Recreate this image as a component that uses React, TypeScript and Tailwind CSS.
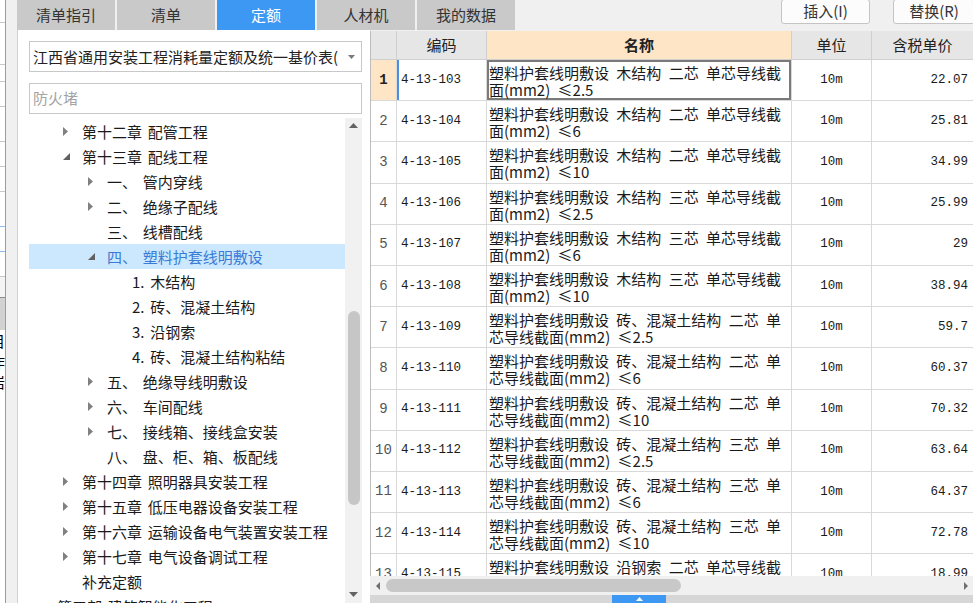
import React from 'react';

type TreeItem = { lvl: number; arrow: 'c' | 'e' | null; t: string; sel?: boolean };

const tree: TreeItem[] = [
  { lvl: 1, arrow: 'c', t: '第十二章 配管工程' },
  { lvl: 1, arrow: 'e', t: '第十三章 配线工程' },
  { lvl: 2, arrow: 'c', t: '一、 管内穿线' },
  { lvl: 2, arrow: 'c', t: '二、 绝缘子配线' },
  { lvl: 2, arrow: null, t: '三、 线槽配线' },
  { lvl: 2, arrow: 'e', t: '四、 塑料护套线明敷设', sel: true },
  { lvl: 3, arrow: null, t: '1. 木结构' },
  { lvl: 3, arrow: null, t: '2. 砖、混凝土结构' },
  { lvl: 3, arrow: null, t: '3. 沿钢索' },
  { lvl: 3, arrow: null, t: '4. 砖、混凝土结构粘结' },
  { lvl: 2, arrow: 'c', t: '五、 绝缘导线明敷设' },
  { lvl: 2, arrow: 'c', t: '六、 车间配线' },
  { lvl: 2, arrow: 'c', t: '七、 接线箱、接线盒安装' },
  { lvl: 2, arrow: null, t: '八、 盘、柜、箱、板配线' },
  { lvl: 1, arrow: 'c', t: '第十四章 照明器具安装工程' },
  { lvl: 1, arrow: 'c', t: '第十五章 低压电器设备安装工程' },
  { lvl: 1, arrow: 'c', t: '第十六章 运输设备电气装置安装工程' },
  { lvl: 1, arrow: 'c', t: '第十七章 电气设备调试工程' },
  { lvl: 1, arrow: null, t: '补充定额' },
  { lvl: 0, arrow: null, t: '第五部 建筑智能化工程' },
];

const lvlPad = ['pl-[3px]', 'pl-[28px]', 'pl-[53px]', 'pl-[78px]'];

type Row = { n: number; code: string; l1: string; l2: string; price: string };

const W1 = (a: string) => `塑料护套线明敷设 木结构 ${a} 单芯导线截`;
const B1 = (a: string) => `塑料护套线明敷设 砖、混凝土结构 ${a} 单`;

const rows: Row[] = [
  { n: 1, code: '4-13-103', l1: W1('二芯'), l2: '面(mm2) ≤2.5', price: '22.07' },
  { n: 2, code: '4-13-104', l1: W1('二芯'), l2: '面(mm2) ≤6', price: '25.81' },
  { n: 3, code: '4-13-105', l1: W1('二芯'), l2: '面(mm2) ≤10', price: '34.99' },
  { n: 4, code: '4-13-106', l1: W1('三芯'), l2: '面(mm2) ≤2.5', price: '25.99' },
  { n: 5, code: '4-13-107', l1: W1('三芯'), l2: '面(mm2) ≤6', price: '29' },
  { n: 6, code: '4-13-108', l1: W1('三芯'), l2: '面(mm2) ≤10', price: '38.94' },
  { n: 7, code: '4-13-109', l1: B1('二芯'), l2: '芯导线截面(mm2) ≤2.5', price: '59.7' },
  { n: 8, code: '4-13-110', l1: B1('二芯'), l2: '芯导线截面(mm2) ≤6', price: '60.37' },
  { n: 9, code: '4-13-111', l1: B1('二芯'), l2: '芯导线截面(mm2) ≤10', price: '70.32' },
  { n: 10, code: '4-13-112', l1: B1('三芯'), l2: '芯导线截面(mm2) ≤2.5', price: '63.64' },
  { n: 11, code: '4-13-113', l1: B1('三芯'), l2: '芯导线截面(mm2) ≤6', price: '64.37' },
  { n: 12, code: '4-13-114', l1: B1('三芯'), l2: '芯导线截面(mm2) ≤10', price: '72.78' },
  { n: 13, code: '4-13-115', l1: '塑料护套线明敷设 沿钢索 二芯 单芯导线截', l2: '面(mm2) ≤2.5', price: '18.99' },
];

function Collapsed() {
  return (
    <svg width="5" height="9" viewBox="0 0 5 9">
      <polygon points="0,0 5,4.5 0,9" fill="#808080" />
    </svg>
  );
}
function Expanded() {
  return (
    <svg width="7" height="7" viewBox="0 0 7 7">
      <polygon points="7,0 7,7 0,7" fill="#606060" />
    </svg>
  );
}

function LeftStrip() {
  const segs: [string, string][] = [
    ['h-[23px]', 'border-[#c8c8c8]'],
    ['h-[42px]', 'border-[#c8c8c8]'],
    ['h-[17px]', 'border-[#c8c8c8]'],
    ['h-[25px]', 'border-[#c8c8c8]'],
    ['h-[35px]', 'border-[#c8c8c8]'],
    ['h-[25px]', 'border-[#c8c8c8]'],
    ['h-[25px]', 'border-[#c8c8c8]'],
    ['h-[35px]', 'border-[#8fbcec]'],
    ['h-[25px]', 'border-[#8fbcec]'],
    ['h-[25px]', 'border-[#c8c8c8]'],
  ];
  return (
    <div className="w-[17px] h-full flex shrink-0">
      <div className="w-[5px] bg-white flex flex-col overflow-hidden">
        {segs.map(([h, c], i) => (
          <div key={i} className={`${h} ${c} border-b shrink-0`} />
        ))}
        <div className="h-[20px] shrink-0 bg-[#f4f4f4]" />
        <div className="h-[33px] shrink-0 bg-[#d2d2d2] border-t border-[#8a8a8a]" />
        <div className="h-[22px] shrink-0 overflow-hidden leading-[22px] text-[15px] text-black">
          <span className="block -ml-[10px]">目</span>
        </div>
        <div className="h-[44px] shrink-0 overflow-hidden leading-[20px] text-[15px] text-black">
          <span className="block -ml-[10px]">作</span>
          <span className="block -ml-[10px]">岩</span>
        </div>
      </div>
      <div className="w-[1px] h-full bg-[#9c9c9c]" />
      <div className="flex-1 h-full bg-[#f0f0f0]" />
    </div>
  );
}

function TopBar() {
  const tabs = ['清单指引', '清单', '定额', '人材机', '我的数据'];
  return (
    <div className="h-[30px] flex shrink-0">
      <div className="flex gap-[2px]">
        {tabs.map((t) => (
          <div
            key={t}
            className={
              t === '定额'
                ? 'w-[98px] h-[30px] flex items-center justify-center bg-[#3d98f4] text-white text-[15px]'
                : 'w-[98px] h-[30px] flex items-center justify-center bg-[#c9c9c9] text-[#333] text-[15px]'
            }
          >
            {t}
          </div>
        ))}
      </div>
      <div className="flex-1" />
      <div className="w-[89px] h-[25px] -mt-[1px] border border-[#c4c4c4] rounded-[3px] bg-[#fcfcfc] flex items-center justify-center text-[15px] text-[#333]">
        插入(I)
      </div>
      <div className="w-[23px]" />
      <div className="w-[82px] h-[25px] -mt-[1px] -mr-[2px] border border-[#c4c4c4] rounded-[3px] bg-[#fcfcfc] flex items-center justify-center text-[15px] text-[#333]">
        替换(R)
      </div>
    </div>
  );
}

function LeftPanel() {
  return (
    <div className="w-[353px] shrink-0 bg-white border-l border-[#d0d0d0] flex flex-col pl-[11px] pr-[8px] min-h-0">
      <div className="mt-[11px] h-[31px] shrink-0 border border-[#c8c8c8] flex items-center pl-[3px] pr-[6px]">
        <div className="flex-1 overflow-hidden whitespace-nowrap text-[15px] text-[#222] leading-[29px]">
          江西省通用安装工程消耗量定额及统一基价表(江西省
        </div>
        <svg width="7" height="4" viewBox="0 0 7 4" className="ml-[10px] shrink-0">
          <polygon points="0,0 7,0 3.5,4" fill="#7a7a7a" />
        </svg>
      </div>
      <div className="mt-[11px] h-[31px] shrink-0 border border-[#c8c8c8] flex items-center pl-[3px] text-[15px] text-[#a3a3a3]">
        防火堵
      </div>
      <div className="mt-[4px] flex-1 flex min-h-0">
        <div className="flex-1 overflow-hidden pt-[1px] min-w-0">
          {tree.map((it, i) => (
            <div
              key={i}
              className={
                (it.sel ? 'bg-[#cce8ff] text-[#3a7bd5] ' : 'text-[#1a1a1a] ') +
                lvlPad[it.lvl] +
                ' h-[25px] flex items-center whitespace-nowrap text-[15px] leading-[25px] [word-spacing:2.5px]'
              }
            >
              <div className="w-[25px] shrink-0 flex items-center pl-[6px]">
                {it.arrow === 'c' ? <Collapsed /> : it.arrow === 'e' ? <Expanded /> : null}
              </div>
              <span>{it.t}</span>
            </div>
          ))}
        </div>
        <div className="w-[17px] shrink-0 bg-[#f1f1f1] flex flex-col items-center">
          <div className="h-[14px] flex items-center justify-center shrink-0">
            <svg width="9" height="5" viewBox="0 0 9 5">
              <polygon points="0,5 9,5 4.5,0" fill="#636363" />
            </svg>
          </div>
          <div className="mt-[179px] w-[12px] h-[194px] rounded-full bg-[#c6c6c6] shrink-0" />
          <div className="flex-1" />
          <div className="h-[18px] flex items-center justify-center shrink-0">
            <svg width="9" height="5" viewBox="0 0 9 5">
              <polygon points="0,0 9,0 4.5,5" fill="#636363" />
            </svg>
          </div>
        </div>
      </div>
    </div>
  );
}

const grid = 'grid grid-cols-[26px_90px_305px_80px_1fr]';
const mono = "font-['Liberation_Mono','Noto_Sans_CJK_SC',monospace]";

function TablePanel() {
  return (
    <div className="flex-1 flex flex-col min-w-0">
      <div className="flex-1 overflow-hidden mt-[1px] border-l border-[#bdbdbd] bg-white min-h-0">
        <div className={`${grid} h-[29px] text-[15px] text-[#222]`}>
          <div className="bg-[#e6e6e6] border-r border-b border-[#cfcfcf]" />
          <div className="bg-[#e6e6e6] border-r border-b border-[#cfcfcf] flex items-center justify-center">编码</div>
          <div className="bg-[#fde5c6] border-r border-b border-[#cfcfcf] flex items-center justify-center font-bold">名称</div>
          <div className="bg-[#e6e6e6] border-r border-b border-[#cfcfcf] flex items-center justify-center">单位</div>
          <div className="bg-[#e6e6e6] border-b border-[#cfcfcf] flex items-center justify-center">含税单价</div>
        </div>
        {rows.map((r) => {
          const sel = r.n === 1;
          return (
            <div key={r.n} className={`${grid} h-[41.2px] text-[#1a1a1a]`}>
              <div
                className={
                  (sel ? 'bg-[#fde5c6] font-bold text-[#222] ' : 'text-[#555] ') +
                  `${mono} border-r border-b border-[#d9d9d9] flex items-center justify-center text-[14px]`
                }
              >
                {r.n}
              </div>
              <div
                className={
                  (sel ? 'shadow-[inset_2px_0_0_#4a8fe0] ' : '') +
                  `${mono} border-r border-b border-[#d9d9d9] flex items-center pl-[4px] text-[12.5px]`
                }
              >
                {r.code}
              </div>
              <div
                className={
                  (sel ? 'shadow-[inset_0_0_0_2px_#7a7a7a] ' : '') +
                  'border-r border-b border-[#d9d9d9] pl-[2px] pt-[4px] text-[15px] leading-[17px] whitespace-nowrap overflow-hidden [word-spacing:4px]'
                }
              >
                <div>{r.l1}</div>
                <div>{r.l2}</div>
              </div>
              <div className={`${mono} border-r border-b border-[#d9d9d9] flex items-center justify-center text-[12.5px]`}>
                10m
              </div>
              <div className={`${mono} border-b border-[#d9d9d9] flex items-center justify-end pr-[5px] text-[12.5px]`}>
                {r.price}
              </div>
            </div>
          );
        })}
      </div>
      <div className="h-[19px] shrink-0 bg-[#f0f0f0] flex items-center pl-[6px] pr-[5px]">
        <svg width="4" height="8" viewBox="0 0 4 8">
          <polygon points="4,0 4,8 0,4" fill="#707070" />
        </svg>
        <div className="ml-[6px] w-[295px] h-[13px] rounded-full bg-[#c8c8c8]" />
        <div className="flex-1" />
        <svg width="4" height="8" viewBox="0 0 4 8">
          <polygon points="0,0 0,8 4,4" fill="#707070" />
        </svg>
      </div>
      <div className="h-[8px] shrink-0 bg-[#d6d6d6] flex pl-[242px]">
        <div className="w-[54px] h-[8px] bg-[#3d98f4] flex items-center justify-center">
          <svg width="7" height="4" viewBox="0 0 7 4">
            <polygon points="0,4 7,4 3.5,0" fill="#ffffff" />
          </svg>
        </div>
      </div>
    </div>
  );
}

export default function App() {
  return (
    <div className="w-[973px] h-[603px] overflow-hidden bg-[#f0f0f0] flex font-['Noto_Sans_CJK_SC',sans-serif] text-[#222]">
      <LeftStrip />
      <div className="flex-1 flex flex-col min-w-0">
        <TopBar />
        <div className="flex-1 flex min-h-0">
          <LeftPanel />
          <TablePanel />
        </div>
      </div>
    </div>
  );
}
